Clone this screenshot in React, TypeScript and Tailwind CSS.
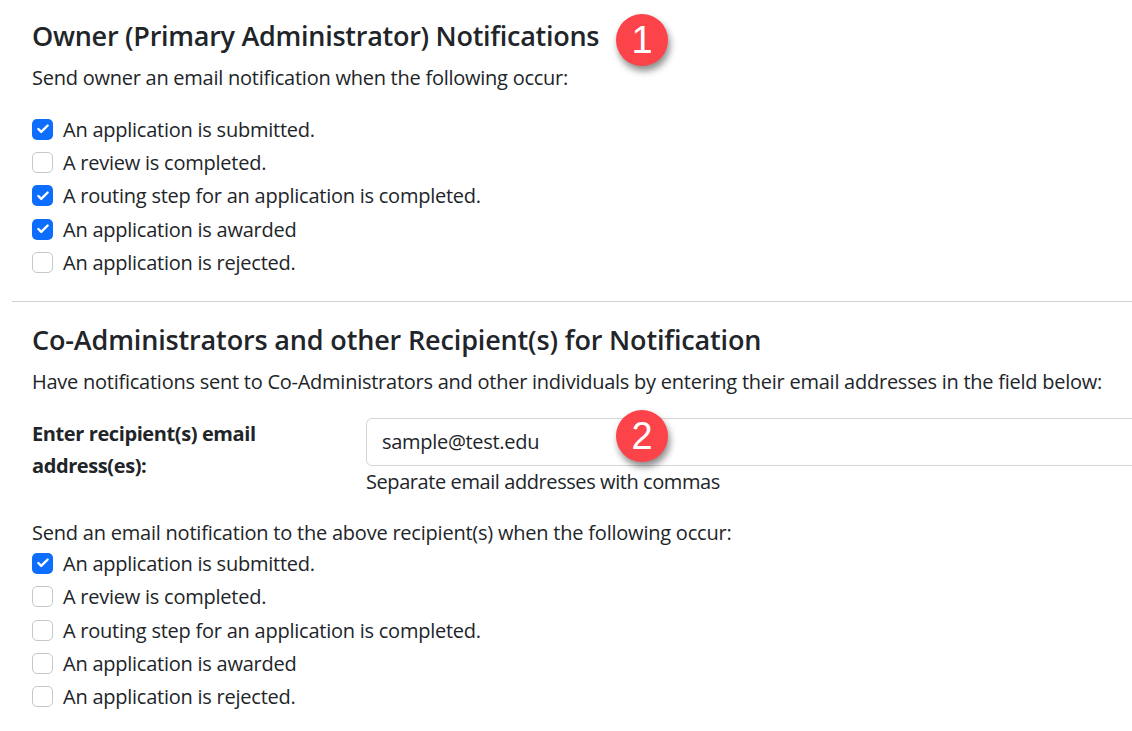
import { Check } from 'lucide-react'

const font = { fontFamily: '"Open Sans", "Noto Sans", sans-serif' }

type Option = { label: string; checked?: boolean }

const ownerOptions: Option[] = [
  { label: 'An application is submitted.', checked: true },
  { label: 'A review is completed.' },
  { label: 'A routing step for an application is completed.', checked: true },
  { label: 'An application is awarded', checked: true },
  { label: 'An application is rejected.' },
]

const recipientOptions: Option[] = [
  { label: 'An application is submitted.', checked: true },
  { label: 'A review is completed.' },
  { label: 'A routing step for an application is completed.' },
  { label: 'An application is awarded' },
  { label: 'An application is rejected.' },
]

function CheckRow({ label, checked }: Option) {
  return (
    <div className="flex h-[33.3px] items-center gap-[10px]">
      {checked ? (
        <span className="flex size-[21px] items-center justify-center rounded-[5px] bg-[#0d6efd]">
          <Check className="size-[14px] text-white" strokeWidth={4} aria-hidden />
        </span>
      ) : (
        <span className="size-[21px] rounded-[5px] border border-[#c4c8cc] bg-white" />
      )}
      <span>{label}</span>
    </div>
  )
}

function Badge({ n, className }: { n: number; className: string }) {
  return (
    <span
      className={`absolute flex size-[52px] items-center justify-center rounded-full bg-[#fc4349] text-[38px] text-white shadow-[2px_5px_7px_rgba(0,0,0,0.45)] ${className}`}
      style={{ fontFamily: '"Liberation Sans", sans-serif' }}
    >
      {n}
    </span>
  )
}

export default function App() {
  return (
    <div className="relative h-[731px] w-[1132px] overflow-hidden bg-white pl-3 text-[20px] leading-[33px] tracking-[-0.24px] text-[#212529]" style={font}>
      <section className="pl-5 pt-[19px]">
        <h2 className="text-[27px] font-semibold leading-[34px] tracking-[-0.27px]">Owner (Primary Administrator) Notifications</h2>
        <p className="mt-[8px] tracking-[-0.25px]">Send owner an email notification when the following occur:</p>
        <div className="mt-[18.7px]">
          {ownerOptions.map((o) => (
            <CheckRow key={o.label} {...o} />
          ))}
        </div>
      </section>

      <hr className="mt-[22.3px] border-[#cfd1d3]" />

      <section className="pl-5 pt-[21px]">
        <h2 className="text-[27px] font-semibold leading-[34px] tracking-[-0.15px]">Co-Administrators and other Recipient(s) for Notification</h2>
        <p className="mt-[8px] whitespace-nowrap tracking-[-0.25px]">Have notifications sent to Co-Administrators and other individuals by entering their email addresses in the field below:</p>
        <div className="mt-[20px] flex">
          <label className="w-[334px] shrink-0 pr-10 font-bold leading-[32px] tracking-[-0.4px]">Enter recipient(s) email address(es):</label>
          <div className="flex-1">
            <div className="flex h-[48px] w-[800px] items-center rounded-[6px] border border-[#d3d6d9] pb-[2px] pl-[15px] tracking-[-0.3px]">sample@test.edu</div>
            <p className="-mt-[1px] tracking-[-0.42px]">Separate email addresses with commas</p>
          </div>
        </div>
        <p className="mt-[18px] tracking-[-0.22px]">Send an email notification to the above recipient(s) when the following occur:</p>
        <div className="-mt-[2.7px]">
          {recipientOptions.map((o) => (
            <CheckRow key={o.label} {...o} />
          ))}
        </div>
      </section>

      <Badge n={1} className="left-[616px] top-[14px]" />
      <Badge n={2} className="left-[616px] top-[410px]" />
    </div>
  )
}
